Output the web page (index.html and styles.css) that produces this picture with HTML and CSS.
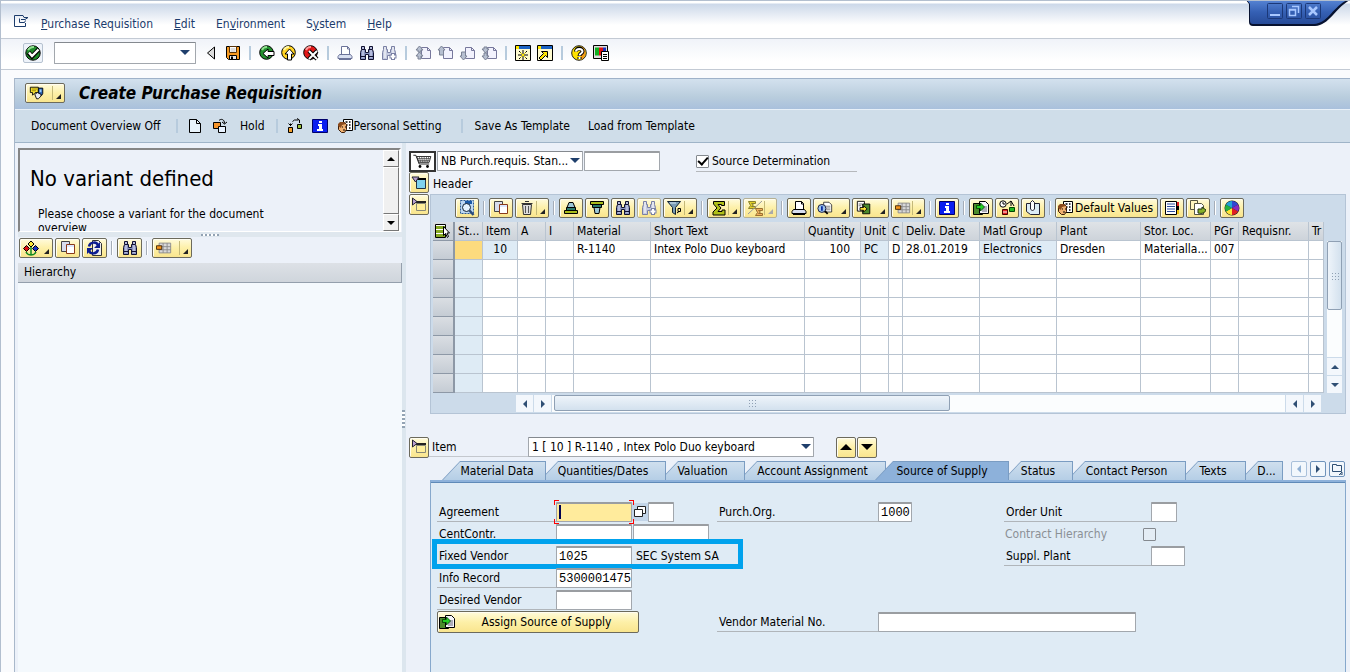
FILE: index.html
```html
<!DOCTYPE html>
<html lang="en">
  <head>
    <meta charset="UTF-8" />
    <meta name="viewport" content="width=device-width, initial-scale=1" />
    <title>Create Purchase Requisition</title>
    <link rel="stylesheet" href="styles.css">
  </head>
  <body>
    <svg class="sprite" aria-hidden="true">
      <symbol id="i-ok" viewBox="0 0 16 16"><circle cx="8" cy="8" r="7.2" fill="#1e8a2a" stroke="#000" /><path d="M3 5a6 6 0 0 1 6-3" stroke="#8fe08f" stroke-width="2" fill="none" /><path d="M3.500 7.500l3.500 4 6.500-7" stroke="#000" stroke-width="4.500" fill="none" /><path d="M4 7.500l3 3.500 6.500-6.500" stroke="#fff" stroke-width="2.400" fill="none" /></symbol>
      <symbol id="i-save" viewBox="0 0 16 16"><path d="M1.500 1.500h13v13h-11l-2-2z" fill="#f59a23" stroke="#000" /><path d="M4.500 1.500h7v6h-7z" fill="#fff" stroke="#5a3408" /><path d="M5.500 4h5M5.500 6h5" stroke="#bbb" /><path d="M4.500 10.500h7v4h-7z" fill="#e9e9e9" stroke="#000" /><path d="M6 11.500h2v3H6z" fill="#000" /></symbol>
      <symbol id="i-back" viewBox="0 0 16 16"><circle cx="7.500" cy="7.500" r="6.800" fill="#22902e" stroke="#000" /><path d="M3 5a5 5 0 0 1 5-3" stroke="#8fe08f" stroke-width="2" fill="none" /><path d="M4 8.500l5-4.500v2.500h6v4H9V13z" fill="#fff" stroke="#000" /></symbol>
      <symbol id="i-exit" viewBox="0 0 16 16"><circle cx="7.500" cy="7.500" r="6.800" fill="#ffd324" stroke="#000" /><path d="M3 5a5 5 0 0 1 5-3" stroke="#fff7a8" stroke-width="2" fill="none" /><path d="M8.500 4L13 9h-2.500v6h-4V9H4z" fill="#fff" stroke="#000" /></symbol>
      <symbol id="i-cancel" viewBox="0 0 16 16"><circle cx="7.500" cy="7.500" r="6.800" fill="#e01818" stroke="#000" /><path d="M3 5a5 5 0 0 1 5-3" stroke="#ff9a9a" stroke-width="2" fill="none" /><path d="M6 6l8 8M14 6l-8 8" stroke="#000" stroke-width="4" /><path d="M6 6l8 8M14 6l-8 8" stroke="#fff" stroke-width="2" /></symbol>
      <symbol id="i-print" viewBox="0 0 16 16"><path d="M4.500 10V1.500h6l2 2V10" fill="#fff" stroke="currentColor" /><path d="M10.500 1.500v2.500h2" fill="none" stroke="currentColor" /><path d="M2.500 9.500h11l1.500 2v2H1v-2z" fill="#d8dff0" stroke="currentColor" /><path d="M2 14h12" stroke="currentColor" stroke-width="2" /></symbol>
      <symbol id="i-find" viewBox="0 0 16 16"><path d="M2.500 1.500h3v3h1v3h3v-3h1v-3h3v3l1 3v7h-5v-5h-3v5h-5v-7l1-3z" fill="#8a94c0" stroke="#101030" /><path d="M4 2v11M12 2v11" stroke="#dfe3f8" /><path d="M1.500 11.500h5M9.500 11.500h5M3 4.500h3M10 4.500h3" stroke="#101030" /></symbol>
      <symbol id="i-findnext" viewBox="0 0 16 16"><path d="M2.500 1.500h3v3h1v3h3v-3h1v-3h3v3l1 3v3h-8v4h-5v-7l1-3z" fill="#c5cbe0" stroke="#7a80a4" /><path d="M4 2v11M12 2v6" stroke="#fff" /><path d="M12 8v7M8.500 11.500h7" stroke="#7a80a4" stroke-width="4" /><path d="M12 9v5M9.500 11.500h5" stroke="#fff" stroke-width="2" /></symbol>
      <symbol id="i-page" viewBox="0 0 16 16"><path d="M6.500 2.500h6l3 3v8h-9z" fill="#f2f2fd" stroke="#77789c" /><path d="M12.500 2.500v3h3" fill="none" stroke="#77789c" /></symbol>
      <symbol id="i-first" viewBox="0 0 16 16"><use href="#i-page" /><path d="M4.500 1L8 5H6v2H3V5H1zM4.500 7L8 11H6v3H3v-3H1z" fill="#b6bfd0" stroke="#7b8295" /></symbol>
      <symbol id="i-prev" viewBox="0 0 16 16"><use href="#i-page" /><path d="M4.500 1L8 5H6.500v5h-4V5H1z" fill="#b6bfd0" stroke="#7b8295" /></symbol>
      <symbol id="i-next" viewBox="0 0 16 16"><use href="#i-page" /><path d="M2.500 7h4v4H8l-3.500 4L1 11h1.500z" fill="#b6bfd0" stroke="#7b8295" /></symbol>
      <symbol id="i-last" viewBox="0 0 16 16"><use href="#i-page" /><path d="M3 2h3v2h2L4.500 8 1 4h2zM3 8h3v3h2l-3.500 4L1 11h2z" fill="#b6bfd0" stroke="#7b8295" /></symbol>
      <symbol id="i-session" viewBox="0 0 16 16"><path d="M.5.5h15v15H.5z" fill="#fffbd0" stroke="#000" /><path d="M1 1h14v3H1z" fill="#1b62c4" /><path d="M1 1h3v3H1z" fill="#ffe600" /><path d="M4 6l8 8M12 6l-8 8M8 5v10M3 10h10" stroke="#000" /><path d="M5.500 7.500l5 5M10.500 7.500l-5 5" stroke="#ffe600" /><path d="M7 9h2v2H7z" fill="#ffe600" /></symbol>
      <symbol id="i-shortcut" viewBox="0 0 16 16"><path d="M.5.5h15v15H.5z" fill="#fffbd0" stroke="#000" /><path d="M1 1h14v3H1z" fill="#1b62c4" /><path d="M1 1h3v3H1z" fill="#ffe600" /><path d="M4.500 6.500h6v6l-2-2-4.500 4.500-2-2L6.500 8.500z" fill="#ffe600" stroke="#000" /></symbol>
      <symbol id="i-help" viewBox="0 0 16 16"><circle cx="8" cy="8" r="7.300" fill="#ffe100" stroke="#222" /><path d="M10 1.500a7 7 0 0 1 0 13z" fill="#f59a1a" /><path d="M5 6.500c0-4 6.500-4 6.500 0 0 2-3 2-3 4.500M8.500 12v2" stroke="#000" stroke-width="4" fill="none" /><path d="M5 6.500c0-3.500 6.500-3.500 6.500 0 0 2-3 2-3 4M8.500 12v2" stroke="#fff" stroke-width="2" fill="none" /></symbol>
      <symbol id="i-layout" viewBox="0 0 16 16"><path d="M.5.5h14v13H.5z" fill="#ddd" stroke="#000" /><path d="M2 2.500h4v8H2z" fill="#10b020" /><path d="M6 2.500h4v8H6z" fill="#e01010" /><path d="M10 2.500h3v8h-3z" fill="#1a30c0" /><path d="M8.500 6.500h7v9h-7z" fill="#fff" stroke="#000" /><path d="M10 9.500h4M10 11.500h4M10 13.500h4" stroke="#000" /></symbol>
      <symbol id="i-chat" viewBox="0 0 18 16"><path d="M1.500 1.500h9v6H7l-3 3V7.500H1.500z" fill="#ffe836" stroke="#000" /><path d="M3 3.500h6M3 5.500h5" stroke="#8a7a00" /><path d="M10.500 2.500h5v6l-1 2h-4z" fill="#2a62b8" stroke="#000" /><path d="M6.500 9.500l3-2 4 2v2l-3 3h-2z" fill="#e8eaf4" stroke="#000" /><path d="M12 4h2v3h-2z" fill="#9cd0ff" /></symbol>
      <symbol id="i-new" viewBox="0 0 16 16"><path d="M2.500 1.500h7l4 4v9h-11z" fill="#e8f3fb" stroke="#000" /><path d="M9.500 1.500v4h4" fill="none" stroke="#000" /></symbol>
      <symbol id="i-other" viewBox="0 0 16 16"><path d="M1.500 4.500h7v6h-7z" fill="#f5942a" stroke="#000" /><path d="M6.500 8.500h7v6h-7z" fill="#e8f2ff" stroke="#000" /><path d="M7 2.500c2-2 5.500-1.500 5.500 3M10 4l2.500 2L15 4" fill="none" stroke="#000" /></symbol>
      <symbol id="i-rel" viewBox="0 0 16 16"><path d="M1.500 9.500h4v5h-4z" fill="#f5a02a" stroke="#000" /><path d="M10.500 6.500h4v4h-4z" fill="#9ac43a" stroke="#000" /><path d="M3.500 8V5.500M5.500 3.500l2-1.500h4M10 .5L12.500 2v3M1.500 5.500l2 2 2-2" fill="none" stroke="#000" /></symbol>
      <symbol id="i-info" viewBox="0 0 16 16"><path d="M.5 1.500h15v13H.5z" fill="#0a1ef0" stroke="#00006a" /><path d="M7 3h3v2H7zM6 6h4v5h1v2H5v-2h2V8H6z" fill="#fff" /></symbol>
      <symbol id="i-person" viewBox="0 0 16 16"><path d="M6.500 1.500h9v11h-9z" fill="#fff" stroke="#000" /><path d="M8.500 4h2M12 4h1.500M8.500 7h2M12 7h1.500M12 10h1.500" stroke="#000" stroke-width="1.500" /><path d="M1.500 6.500l2-2h4l2 2v5l-2 3h-3l-3-3z" fill="#f0b070" stroke="#3a1c08" /><path d="M1 8V6l2-2h4l2 2-4 1-1 3z" fill="#8a4a1c" /><path d="M5 9h1M8 9h1M6 12h2" stroke="#000" /></symbol>
      <symbol id="i-colors" viewBox="0 0 16 16"><path d="M8 1l3 3-3 3-3-3z" fill="#ffe836" stroke="#000" /><path d="M3.500 5.500l3 3-3 3-3-3z" fill="#e01010" stroke="#000" /><path d="M12.500 5.500l3 3-3 3-3-3z" fill="#1a30c0" stroke="#000" /><path d="M8 7v8M3 12c1 2 3 3 5 3s4-1 5-3" fill="none" stroke="#128a20" stroke-width="1.500" /></symbol>
      <symbol id="i-copy" viewBox="0 0 16 16"><path d="M1.500 1.500h8v10h-8z" fill="#d8dced" stroke="#444" /><path d="M6.500 4.500h8v9h-8z" fill="#fff" stroke="#8a3a1a" /><path d="M7 5h7v2H7z" fill="#dce8ff" /></symbol>
      <symbol id="i-refresh" viewBox="0 0 16 16"><path d="M5.500.5h6l3 3v12h-9z" fill="#eee" stroke="#333" /><path d="M2 6.500c1-5 8-5 9-1M11 9.500c-1 5-8 5-9 1" stroke="#0c1c90" stroke-width="2.500" fill="none" /><path d="M13 2v6H7zM0 14V8h6z" fill="#0c1c90" /></symbol>
      <symbol id="i-grid" viewBox="0 0 18 16"><path d="M3.500 2.500h13v11h-13z" fill="#d8d8d8" stroke="#888" /><path d="M3.500 6.500h13M3.500 10h13M8 2.500v11M12.500 2.500v11" fill="none" stroke="#888" /><path d="M.5 5.500h6v4h-6z" fill="#f5941a" stroke="#3a2000" /></symbol>
      <symbol id="i-cart" viewBox="0 0 24 18"><path d="M1 1.500h3l4 10.500h12" fill="none" stroke="#000" /><path d="M5 3h17l-2 7H8z" fill="#fff" stroke="#111" /><path d="M8 3l2 7M11 3l1 7M14 3v7M17 3l-1 7M19.500 3L18 10M6 5.500h15M7 8h13" stroke="#333" stroke-width=".8" /><circle cx="9" cy="15" r="1.700" /><circle cx="18" cy="15" r="1.700" /></symbol>
      <symbol id="i-collapse" viewBox="0 0 16 16"><path d="M5.500 4.500h9v9h-9z" fill="#7fd2ee" stroke="#234" /><path d="M5 4h10" stroke="#000" stroke-width="2" /><path d="M1 2h7L4.500 7z" fill="#b9a0d0" stroke="#223" /></symbol>
      <symbol id="i-expand" viewBox="0 0 16 16"><path d="M5.500 6.500h9v7h-9z" fill="#ffef9a" stroke="#887" /><path d="M5 5h10" stroke="#222" stroke-width="2" /><path d="M1.500 1v7L6 4.500z" fill="#b9a0d0" stroke="#223" /></symbol>
      <symbol id="i-detail" viewBox="0 0 16 16"><path d="M1.500.5h13v13h-13z" fill="#bcd8f4" stroke="#2a5a9a" stroke-dasharray="2 1" /><path d="M6 2.500h7" stroke="#1a5aa8" stroke-width="3" /><circle cx="7.500" cy="7.500" r="4" fill="#e6f4ff" stroke="#123" /><path d="M10.500 10.500l4 4.500" stroke="#2a4a7a" stroke-width="2.500" /></symbol>
      <symbol id="i-trash" viewBox="0 0 16 16"><path d="M3.500 4.500h9l-1 10h-7z" fill="#ddd" stroke="#333" /><path d="M2.500 3.500h11M6 1.500h4" stroke="#333" /><path d="M6.500 6v7M9.500 6v7" stroke="#555" /></symbol>
      <symbol id="i-asc" viewBox="0 0 16 16"><path d="M6 2.500h4l2 5H4z" fill="#9cc8d8" stroke="#000" /><path d="M1.500 10.500h13v3h-13z" fill="#a8bc1a" stroke="#000" /><path d="M3.500 7.500h9v3h-9z" fill="#2a7a6a" stroke="#000" /></symbol>
      <symbol id="i-desc" viewBox="0 0 16 16"><path d="M1.500 1.500h13v3h-13z" fill="#a8bc1a" stroke="#000" /><path d="M3.500 4.500h9v3h-9z" fill="#2a7a6a" stroke="#000" /><path d="M5 7.500h6l-1 6H6z" fill="#9cc8d8" stroke="#000" /></symbol>
      <symbol id="i-filter" viewBox="0 0 16 16"><path d="M.5 1.500h13l-5 6v7l-3-2v-5z" fill="#7a9cb4" stroke="#102030" /><path d="M3 3h6" stroke="#d6e6f2" /><path d="M11 8.500h2.500v3H11zM10 13l2-1.500" fill="none" stroke="#000" /></symbol>
      <symbol id="i-sum" viewBox="0 0 16 16"><path d="M2.500 1.500h11v4h-3v-1H7l3 3.500-3 3.500h4v-1.500h3v5h-12v-3l4-4-3.500-4z" fill="#b0c018" stroke="#000" /></symbol>
      <symbol id="i-subsum" viewBox="0 0 16 16"><path d="M1.500 1.500h7v2h-4l2 1.500-2 1.500h4v2h-7l2-3z" fill="#e3d028" stroke="#8a8230" /><path d="M8.500 8.500h7v2h-4l2 1.500-2 1.500h4v2h-7l2-3z" fill="#f0b060" stroke="#9a7030" /><path d="M15 1L1 14" stroke="#999" /></symbol>
      <symbol id="i-preview" viewBox="0 0 18 16"><path d="M7.500 1.500h6l3 3v8h-9z" fill="#fff" stroke="#333" /><path d="M9 6h6M9 8h6M9 10h6" stroke="#777" /><circle cx="5.500" cy="8.500" r="4.500" fill="#9cc4ee" stroke="#113" /><path d="M5.500 6v5" stroke="#0a2aa0" stroke-width="2" /><path d="M9 11.500l3 3" stroke="#000" stroke-width="2" /></symbol>
      <symbol id="i-export" viewBox="0 0 18 16"><path d="M1.500.5h8v11h-8z" fill="#fff" stroke="#000" /><path d="M3 3.500h4M3 5.500h3" stroke="#666" /><path d="M7.500 3.500h8v11h-8z" fill="#4c8a2c" stroke="#000" /><path d="M4.500 7.500h4v-2l4 3.500-4 3.500v-2h-4z" fill="#ffe636" stroke="#000" /></symbol>
      <symbol id="i-assign" viewBox="0 0 16 16"><path d="M.5 3.500h9v11h-9z" fill="#4c8a2c" stroke="#000" /><path d="M6.500 1.500h6l3 3v9h-9z" fill="#f4f4fa" stroke="#000" /><path d="M9 7h5M9 9h5M9 11h5" stroke="#667" /><path d="M3.500 5.500h4V3l4 4-4 4V8.500h-4z" fill="#22d022" stroke="#003a00" stroke-width=".8" /></symbol>
      <symbol id="i-alarm" viewBox="0 0 16 16"><circle cx="4" cy="4" r="3.200" fill="#fff" stroke="#000" /><path d="M4 2v2h2M8 4l4-3 3 5M12 1v5" fill="none" stroke="#000" /><path d="M3.500 9.500h5v5h-5z" fill="#e02020" stroke="#400" /><path d="M10.500 7.500h5v4h-5z" fill="#20b820" stroke="#040" /><path d="M4 12h4" stroke="#fff" /></symbol>
      <symbol id="i-clip" viewBox="0 0 16 16"><path d="M1.500 3.500h13v11h-9l-4-3z" fill="#dcecf6" stroke="#223" /><path d="M5.500 9V2.500l2-2 2 2V9l-2 2z" fill="#fff" stroke="#223" /></symbol>
      <symbol id="i-list" viewBox="0 0 16 16"><path d="M1.500 1.500h11v13h-11z" fill="#fff" stroke="#000" /><path d="M3 4h8M3 6.500h8M3 9h8M3 11.500h8" stroke="#2a4a9a" /><path d="M13 2h2v4h-2z" fill="#e02020" /><path d="M13 6h2v4h-2z" fill="#000" /><path d="M13 10h2v4h-2z" fill="#f0c010" /></symbol>
      <symbol id="i-pages" viewBox="0 0 16 16"><path d="M.5.5h7v9h-7z" fill="#fff6c0" stroke="#554" /><path d="M4.500 3.500h7l2 2v9h-9z" fill="#fff" stroke="#554" /><path d="M8 9h4V7l4 3c-1 3-4 4-8 3z" fill="#86b02a" stroke="#231" /></symbol>
      <symbol id="i-pie" viewBox="0 0 16 16"><circle cx="8" cy="8" r="7.500" fill="#222" /><path d="M8 8V1a7 7 0 0 1 6 3.500z" fill="#3048d0" /><path d="M8 8l6-3.500a7 7 0 0 1 0 7z" fill="#8a2ac0" /><path d="M8 8l6 3.500A7 7 0 0 1 8 15z" fill="#e02020" /><path d="M8 8v7a7 7 0 0 1-6-3.500z" fill="#ffe636" /><path d="M8 8l-6 3.500a7 7 0 0 1 0-7z" fill="#22b040" /><path d="M8 8L2 4.500A7 7 0 0 1 8 1z" fill="#22a0d8" /></symbol>
      <symbol id="i-select" viewBox="0 0 16 16"><path d="M1.500 1.500h10v13h-10z" fill="#fff" stroke="#000" /><path d="M2 3h9v3H2zM2 7h9v3H2zM2 11h9v3H2z" fill="#86a822" /><path d="M9.500 3.500v9l2-2 2 4 1-1-1.500-3.500h2.500z" fill="#fff" stroke="#000" /></symbol>
    </svg>

    <header class="menubar">
      <svg class="menu-icon" viewBox="0 0 16 14"><path d="M7 1.500H1.500v11H12.500V9M7 1.500h3l1 2h4l-3 2H8M6.500 4.500v4h5l1-2" fill="none" stroke="#1c3c6c" /></svg>
      <nav class="menus">
        <a href="#"><u>P</u>urchase Requisition</a>
        <a href="#"><u>E</u>dit</a>
        <a href="#">En<u>v</u>ironment</a>
        <a href="#">S<u>y</u>stem</a>
        <a href="#"><u>H</u>elp</a>
      </nav>
      <svg class="window-controls" viewBox="0 0 105 28">
        <defs><linearGradient id="wc" x2="0" y2="1"><stop offset="0" stop-color="#5684d4" /><stop offset=".5" stop-color="#3560b4" /><stop offset="1" stop-color="#274b98" /></linearGradient></defs>
        <path d="M1 0h104C90 8 85 25 70 26H8q-4 0-4-4V4z" fill="#071230" />
        <path d="M2 0h100C87 8 83 23 69 24H8q-3 0-3-3V4z" fill="url(#wc)" />
        <g fill="none" stroke="#1b3878"><rect x="22.500" y="3.500" width="15" height="15" rx="1" /><rect x="41.500" y="3.500" width="15" height="15" rx="1" /><rect x="60.500" y="3.500" width="15" height="15" rx="1" /></g>
        <path d="M25 15h10" stroke="#a9c8ff" stroke-width="2" />
        <path d="M44.500 9.500h6v6h-6zM44.500 10h6M47 6.500h6.500V13" fill="none" stroke="#a9c8ff" stroke-width="1.500" />
        <path d="M64 7l8 8M72 7l-8 8" stroke="#a9c8ff" stroke-width="2.500" />
      </svg>
    </header>

    <div class="toolbar">
      <button class="tool ok" aria-label="Enter"><svg><use href="#i-ok" /></svg></button>
      <div class="select command"><select aria-label="Command"><option></option></select></div>
      <button class="tool tri" aria-label="Collapse command field"><svg viewBox="0 0 10 16"><path d="M8.500 2v12L1.500 8z" fill="#ddd" stroke="#000" /></svg></button>
      <button class="tool" aria-label="Save"><svg><use href="#i-save" /></svg></button>
      <span class="sep"></span>
      <button class="tool" aria-label="Back"><svg><use href="#i-back" /></svg></button>
      <button class="tool" aria-label="Exit"><svg><use href="#i-exit" /></svg></button>
      <button class="tool" aria-label="Cancel"><svg><use href="#i-cancel" /></svg></button>
      <span class="sep"></span>
      <button class="tool dim" aria-label="Print"><svg><use href="#i-print" /></svg></button>
      <button class="tool" aria-label="Find"><svg><use href="#i-find" /></svg></button>
      <button class="tool" aria-label="Find next"><svg><use href="#i-findnext" /></svg></button>
      <span class="sep"></span>
      <button class="tool" aria-label="First page"><svg><use href="#i-first" /></svg></button>
      <button class="tool" aria-label="Previous page"><svg><use href="#i-prev" /></svg></button>
      <button class="tool" aria-label="Next page"><svg><use href="#i-next" /></svg></button>
      <button class="tool" aria-label="Last page"><svg><use href="#i-last" /></svg></button>
      <span class="sep"></span>
      <button class="tool" aria-label="New session"><svg><use href="#i-session" /></svg></button>
      <button class="tool" aria-label="Create shortcut"><svg><use href="#i-shortcut" /></svg></button>
      <span class="sep"></span>
      <button class="tool" aria-label="Help"><svg><use href="#i-help" /></svg></button>
      <button class="tool" aria-label="Customize layout"><svg><use href="#i-layout" /></svg></button>
    </div>

    <main class="screen">
      <div class="titlebar">
        <button class="btn split wide" aria-label="Services"><svg><use href="#i-chat" /></svg></button>
        <h1>Create Purchase Requisition</h1>
      </div>

      <div class="appbar">
        <button class="text-btn first">Document Overview Off</button>
        <span class="sep"></span>
        <button class="tool" aria-label="Create"><svg><use href="#i-new" /></svg></button>
        <button class="tool" aria-label="Other requisition"><svg><use href="#i-other" /></svg></button>
        <button class="text-btn hold">Hold</button>
        <span class="sep"></span>
        <button class="tool" aria-label="Object services"><svg><use href="#i-rel" /></svg></button>
        <button class="tool" aria-label="Information"><svg><use href="#i-info" /></svg></button>
        <button class="text-btn"><svg><use href="#i-person" /></svg>Personal Setting</button>
        <span class="sep far"></span>
        <button class="text-btn">Save As Template</button>
        <button class="text-btn">Load from Template</button>
      </div>

      <div class="content">
        <aside class="overview">
          <div class="viewer">
            <div class="viewer-text">
              <h2>No variant defined</h2>
              <p>Please choose a variant for the document overview</p>
            </div>
            <div class="old-scroll">
              <button aria-label="Scroll up"><i class="up"></i></button>
              <span></span>
              <button aria-label="Scroll down"><i class="down"></i></button>
            </div>
          </div>
          <div class="grip-row"><span class="grip"></span></div>
          <div class="btn-row">
            <button class="btn menu" aria-label="Selection variant"><svg><use href="#i-colors" /></svg></button>
            <button class="btn" aria-label="Copy"><svg><use href="#i-copy" /></svg></button>
            <button class="btn" aria-label="Refresh"><svg><use href="#i-refresh" /></svg></button>
            <span class="sep"></span>
            <button class="btn" aria-label="Find"><svg><use href="#i-find" /></svg></button>
            <span class="sep"></span>
            <button class="btn split wide" aria-label="Change layout"><svg><use href="#i-grid" /></svg></button>
          </div>
          <div class="tree-head">Hierarchy</div>
          <div class="tree"></div>
        </aside>

        <div class="splitter"><span class="grip vertical"></span></div>

        <section class="document">
          <div class="doc-head">
            <span class="cart"><svg><use href="#i-cart" /></svg></span>
            <div class="select doc-type"><select aria-label="Document type"><option>NB Purch.requis. Stan...</option></select></div>
            <input class="field" type="text" aria-label="Requisition number" />
            <label class="source-check"><input type="checkbox" checked />Source Determination</label>
          </div>

          <div class="head-line">
            <button class="btn side" aria-label="Expand header"><svg><use href="#i-collapse" /></svg></button>
            <span>Header</span>
          </div>

          <div class="items">
            <button class="btn side" aria-label="Collapse items"><svg><use href="#i-expand" /></svg></button>
            <div class="grid-box">
              <div class="btn-row">
                <button class="btn" aria-label="Details"><svg><use href="#i-detail" /></svg></button>
                <span class="sep"></span>
                <button class="btn" aria-label="Copy"><svg><use href="#i-copy" /></svg></button>
                <button class="btn split" aria-label="Delete"><svg><use href="#i-trash" /></svg></button>
                <span class="sep"></span>
                <button class="btn" aria-label="Sort ascending"><svg><use href="#i-asc" /></svg></button>
                <button class="btn" aria-label="Sort descending"><svg><use href="#i-desc" /></svg></button>
                <button class="btn" aria-label="Find"><svg><use href="#i-find" /></svg></button>
                <button class="btn faded" aria-label="Find next"><svg><use href="#i-findnext" /></svg></button>
                <button class="btn split" aria-label="Filter"><svg><use href="#i-filter" /></svg></button>
                <span class="sep"></span>
                <button class="btn split" aria-label="Total"><svg><use href="#i-sum" /></svg></button>
                <button class="btn split faded" aria-label="Subtotals"><svg><use href="#i-subsum" /></svg></button>
                <span class="sep"></span>
                <button class="btn" aria-label="Print"><svg><use href="#i-print" /></svg></button>
                <button class="btn menu" aria-label="Views"><svg><use href="#i-preview" /></svg></button>
                <button class="btn menu" aria-label="Export"><svg><use href="#i-export" /></svg></button>
                <button class="btn split" aria-label="Change layout"><svg><use href="#i-grid" /></svg></button>
                <span class="sep"></span>
                <button class="btn" aria-label="Information"><svg><use href="#i-info" /></svg></button>
                <span class="sep"></span>
                <button class="btn" aria-label="Assign source"><svg><use href="#i-assign" /></svg></button>
                <button class="btn" aria-label="Release strategy"><svg><use href="#i-alarm" /></svg></button>
                <button class="btn" aria-label="Attachments"><svg><use href="#i-clip" /></svg></button>
                <span class="sep"></span>
                <button class="btn labelled"><svg><use href="#i-person" /></svg>Default Values</button>
                <button class="btn" aria-label="Item list"><svg><use href="#i-list" /></svg></button>
                <button class="btn" aria-label="Catalog"><svg><use href="#i-pages" /></svg></button>
                <span class="sep"></span>
                <button class="btn" aria-label="Graphic"><svg><use href="#i-pie" /></svg></button>
              </div>

              <div class="grid-body">
                <div class="table-wrap">
                  <table>
                    <colgroup>
                      <col class="w22"><col class="w28"><col class="w35"><col class="w28"><col class="w28"><col class="w77">
                      <col class="w154"><col class="w56"><col class="w28"><col class="w14"><col class="w77"><col class="w77">
                      <col class="w84"><col class="w70"><col class="w28"><col class="w70"><col>
                    </colgroup>
                    <thead>
                      <tr>
                        <th class="mark"><svg><use href="#i-select" /></svg></th>
                        <th>St...</th>
                        <th>Item</th>
                        <th>A</th>
                        <th>I</th>
                        <th>Material</th>
                        <th>Short Text</th>
                        <th>Quantity</th>
                        <th>Unit</th>
                        <th>C</th>
                        <th>Deliv. Date</th>
                        <th>Matl Group</th>
                        <th>Plant</th>
                        <th>Stor. Loc.</th>
                        <th>PGr</th>
                        <th>Requisnr.</th>
                        <th>Tr</th>
                      </tr>
                    </thead>
                    <tbody>
                      <tr>
                        <td class="mark"></td>
                        <td class="current"></td>
                        <td class="fixed num">10</td>
                        <td></td>
                        <td></td>
                        <td>R-1140</td>
                        <td>Intex Polo Duo keyboard</td>
                        <td class="num">100</td>
                        <td class="fixed">PC</td>
                        <td>D</td>
                        <td>28.01.2019</td>
                        <td class="fixed">Electronics</td>
                        <td>Dresden</td>
                        <td>Materialla...</td>
                        <td>007</td>
                        <td></td>
                        <td></td>
                      </tr>
                      <tr><td class="mark"></td><td class="fixed"></td><td></td><td></td><td></td><td></td><td></td><td></td><td></td><td></td><td></td><td></td><td></td><td></td><td></td><td></td><td></td></tr>
                      <tr><td class="mark"></td><td class="fixed"></td><td></td><td></td><td></td><td></td><td></td><td></td><td></td><td></td><td></td><td></td><td></td><td></td><td></td><td></td><td></td></tr>
                      <tr><td class="mark"></td><td class="fixed"></td><td></td><td></td><td></td><td></td><td></td><td></td><td></td><td></td><td></td><td></td><td></td><td></td><td></td><td></td><td></td></tr>
                      <tr><td class="mark"></td><td class="fixed"></td><td></td><td></td><td></td><td></td><td></td><td></td><td></td><td></td><td></td><td></td><td></td><td></td><td></td><td></td><td></td></tr>
                      <tr><td class="mark"></td><td class="fixed"></td><td></td><td></td><td></td><td></td><td></td><td></td><td></td><td></td><td></td><td></td><td></td><td></td><td></td><td></td><td></td></tr>
                      <tr><td class="mark"></td><td class="fixed"></td><td></td><td></td><td></td><td></td><td></td><td></td><td></td><td></td><td></td><td></td><td></td><td></td><td></td><td></td><td></td></tr>
                      <tr><td class="mark"></td><td class="fixed"></td><td></td><td></td><td></td><td></td><td></td><td></td><td></td><td></td><td></td><td></td><td></td><td></td><td></td><td></td><td></td></tr>
                    </tbody>
                  </table>
                </div>
                <div class="vscroll">
                  <div class="track"><span class="thumb"><i class="dots"></i></span></div>
                  <button aria-label="Scroll up"><i class="up"></i></button>
                  <button aria-label="Scroll down"><i class="down"></i></button>
                </div>
              </div>
              <div class="hscroll">
                <button aria-label="Scroll left"><i class="left"></i></button>
                <button aria-label="Scroll right"><i class="right"></i></button>
                <div class="track"><span class="thumb"><i class="dots"></i></span></div>
                <button aria-label="Scroll left"><i class="left"></i></button>
                <button aria-label="Scroll right"><i class="right"></i></button>
              </div>
            </div>
          </div>

          <div class="item-line">
            <button class="btn side" aria-label="Collapse item details"><svg><use href="#i-expand" /></svg></button>
            <label for="item-select">Item</label>
            <div class="select item-select"><select id="item-select"><option>1 [ 10 ] R-1140 , Intex Polo Duo keyboard</option></select></div>
            <button class="btn side arrow" aria-label="Previous item"><i class="up"></i></button>
            <button class="btn side" aria-label="Next item"><i class="down"></i></button>
          </div>

          <div class="tabstrip">
            <div class="tabs" role="tablist">
              <button class="tab t1" role="tab">Material Data</button>
              <button class="tab t2" role="tab">Quantities/Dates</button>
              <button class="tab t3" role="tab">Valuation</button>
              <button class="tab t4" role="tab">Account Assignment</button>
              <button class="tab t5 active" role="tab" aria-selected="true">Source of Supply</button>
              <button class="tab t6" role="tab">Status</button>
              <button class="tab t7" role="tab">Contact Person</button>
              <button class="tab t8" role="tab">Texts</button>
              <button class="tab t9" role="tab">D...</button>
            </div>
            <div class="tab-nav">
              <button class="off" aria-label="Previous tab"><i class="left"></i></button>
              <button aria-label="Next tab"><i class="right"></i></button>
              <button aria-label="Tab list"><svg viewBox="0 0 12 12"><path d="M1.500 8.500v-7h4v1h5v6zM11 9v3H8z" fill="none" stroke="#2f4f74" /></svg></button>
            </div>
          </div>

          <div class="panel">
            <form class="fields">
              <div class="row left r1">
                <label for="agreement">Agreement</label>
                <span class="focus"><input class="field" id="agreement" type="text" /></span>
                <button class="match" type="button" aria-label="Search agreement"><svg viewBox="0 0 14 14"><path d="M4.500 1.500h8v7h-8z" fill="#fff" stroke="#222" /><path d="M1.500 4.500h8v7h-8z" fill="#fff" stroke="#222" /></svg></button>
                <input class="field w26" type="text" aria-label="Agreement item" />
              </div>
              <div class="row left r2">
                <label for="contract">CentContr.</label>
                <input class="field" id="contract" type="text" />
                <input class="field next" type="text" aria-label="Central contract item" />
              </div>
              <div class="row left r3 marked">
                <label for="vendor">Fixed Vendor</label>
                <input class="field" id="vendor" type="text" value="1025" />
                <span class="hint">SEC System SA</span>
              </div>
              <div class="row left r4">
                <label for="info">Info Record</label>
                <input class="field" id="info" type="text" value="5300001475" />
              </div>
              <div class="row left r5">
                <label for="desired">Desired Vendor</label>
                <input class="field" id="desired" type="text" />
              </div>
              <div class="row left r6">
                <button class="btn assign" type="button"><svg><use href="#i-assign" /></svg><span>Assign Source of Supply</span></button>
              </div>

              <div class="row middle r1">
                <label for="porg">Purch.Org.</label>
                <input class="field w34" id="porg" type="text" value="1000" />
              </div>
              <div class="row middle r6 long">
                <label for="vmat">Vendor Material No.</label>
                <input class="field w258" id="vmat" type="text" />
              </div>

              <div class="row right r1">
                <label for="unit">Order Unit</label>
                <input class="field w26" id="unit" type="text" />
              </div>
              <div class="row right r2 off">
                <label for="hier">Contract Hierarchy</label>
                <input id="hier" type="checkbox" disabled />
              </div>
              <div class="row right r3">
                <label for="splant">Suppl. Plant</label>
                <input class="field w34" id="splant" type="text" />
              </div>
            </form>
          </div>
        </section>
      </div>
    </main>
  </body>
</html>
```

FILE: styles.css
```css
* {
  box-sizing: border-box;
}
body {
  margin: 0;
  min-height: 100vh;
  display: flex;
  flex-direction: column;
  font-family: "DejaVu Sans Condensed", "DejaVu Sans", sans-serif;
  font-size: 12px;
  line-height: 16px;
  color: #000;
  background: #fafbfd;
  border-top: 1px solid #b3bfcf;
  border-left: 1px solid #b3bfcf;
}
button,
input,
select {
  font: inherit;
  color: inherit;
  margin: 0;
}
button {
  display: flex;
  align-items: center;
  justify-content: center;
  padding: 0;
  border: 0;
  background: none;
  white-space: nowrap;
}
svg {
  width: 16px;
  height: 16px;
  flex: none;
  display: block;
}
.sprite {
  position: absolute;
  width: 0;
  height: 0;
}

/* menu and system toolbar */
.menubar {
  position: relative;
  display: flex;
  align-items: center;
  height: 38px;
  padding: 8px 12px 0;
  background: linear-gradient(#fff 2px, #ccd8e9 3px, #fff 24px);
  border-bottom: 1px solid #c3cad4;
}
.menus {
  display: flex;
  gap: 21px;
  margin-left: 12px;
}
.menus a {
  color: #1c3c6c;
  text-decoration: none;
}
.menu-icon {
  height: 14px;
  margin-bottom: 6px;
}
.window-controls {
  position: absolute;
  top: -1px;
  right: 0;
  width: 105px;
  height: 28px;
}
.toolbar {
  display: flex;
  align-items: center;
  gap: 6px;
  height: 31px;
  padding: 0 22px 2px;
  background: linear-gradient(#f0f3f9, #fff 22px);
  border-bottom: 1px solid #c3cad4;
}
.tool.ok {
  width: 20px;
  height: 20px;
  border: 1px solid #b6c2d0;
  border-radius: 2px;
  background: #eef3fa;
}
.tool.tri {
  margin-right: 3px;
}
.tool.tri svg {
  width: 10px;
}
.dim {
  color: #6b7399;
}
.sep {
  width: 2px;
  height: 14px;
  margin: 0 2px;
  background: #b7cbdd;
}
.select {
  position: relative;
}
.select select {
  display: block;
  width: 100%;
  height: 20px;
  padding: 0 3px;
  appearance: none;
  background: #fff;
  border: 1px solid #a2a7ad;
  border-top-color: #84898f;
  border-radius: 1px;
}
.select::after {
  content: "";
  position: absolute;
  right: 3px;
  top: 7px;
  border: 5px solid transparent;
  border-top-color: #1f3f6c;
  border-bottom: 0;
}
.command {
  width: 142px;
  margin: 0 4px 0 5px;
}
.command select {
  height: 22px;
}
.command::after {
  right: 6px;
  top: 8px;
}

/* screen title */
.screen {
  flex: 1;
  display: flex;
  flex-direction: column;
  margin: 8px 0 0 13px;
  border-top: 1px solid #9fb2c9;
  border-left: 1px solid #a9b8ca;
  background: #ecf1f9;
}
.titlebar {
  display: flex;
  align-items: center;
  gap: 14px;
  height: 30px;
  padding: 0 10px 2px;
  background: linear-gradient(#d3e1ee, #b9cddd 60%, #a9c0dc);
}
h1 {
  margin: 0;
  font-size: 17px;
  line-height: 20px;
  font-style: italic;
}
.appbar {
  display: flex;
  align-items: center;
  gap: 9px;
  height: 34px;
  padding: 0 16px;
  background: #cfdde9;
  border-top: 1px solid #e8f0f8;
  border-bottom: 1px solid #9fb4c8;
}
.text-btn.first {
  min-width: 134px;
  justify-content: flex-start;
}
.text-btn.hold {
  margin-left: 3px;
}
.appbar .text-btn + .text-btn {
  margin-left: 9px;
}
.text-btn svg {
  margin-right: 1px;
}
.appbar .sep {
  margin: 0 0 0 2px;
}
.appbar .sep.far {
  margin: 0 3px 0 10px;
}

/* yellow buttons */
.btn {
  position: relative;
  width: 24px;
  height: 20px;
  flex: none;
  border: 1px solid #6c6a5c;
  border-radius: 2px;
  background: linear-gradient(#fffbdc, #fdf0a8 50%, #f9e58e);
  box-shadow: inset 1px 1px #fffdf0;
}
.btn.split,
.btn.menu {
  justify-content: flex-start;
  padding-left: 3px;
}
.btn.split {
  width: 34px;
}
.btn.menu {
  width: 37px;
}
.btn.wide {
  width: 40px;
}
.btn.split::before {
  content: "";
  position: absolute;
  right: 11px;
  top: 2px;
  bottom: 2px;
  border-left: 1px solid #c4b978;
}
.btn.split::after,
.btn.menu::after {
  content: "";
  position: absolute;
  right: 3px;
  bottom: 3px;
  border-left: 5px solid transparent;
  border-bottom: 5px solid #222;
}
.btn.side {
  width: 20px;
  height: 21px;
}
.btn.faded {
  border-color: #b5b094;
}
.btn.faded::after {
  border-bottom-color: #aaa;
}
.btn.labelled {
  width: auto;
  gap: 2px;
  padding: 0 4px 0 1px;
}
.btn-row {
  display: flex;
  align-items: center;
  gap: 2px;
}
i {
  display: block;
  flex: none;
  border: 4px solid transparent;
  color: #2f4f74;
}
i.up {
  border-bottom-color: currentColor;
  border-top: 0;
}
i.down {
  border-top-color: currentColor;
  border-bottom: 0;
}
i.left {
  border-right-color: currentColor;
  border-left: 0;
}
i.right {
  border-left-color: currentColor;
  border-right: 0;
}
.btn i {
  border-width: 6px;
  color: #000;
}
.btn i.up {
  border-top: 0;
}
.btn i.down {
  border-bottom: 0;
}

/* document overview */
.content {
  flex: 1;
  display: flex;
}
.overview {
  width: 387px;
  flex: none;
  display: flex;
  flex-direction: column;
  padding: 5px 0 0 3px;
}
.viewer {
  display: flex;
  height: 84px;
  width: 383px;
  overflow: hidden;
  border: 2px solid #858585;
  border-right: 2px solid #fff;
  border-bottom: 1px solid #fff;
}
.viewer-text {
  flex: 1;
  padding: 16px 10px;
}
h2 {
  margin: 0 0 15px;
  font-size: 22px;
  line-height: 26px;
  font-weight: normal;
}
.viewer p {
  margin: 0 80px 0 8px;
  line-height: 14px;
}
.old-scroll {
  width: 16px;
  display: flex;
  flex-direction: column;
}
.old-scroll button {
  height: 17px;
}
.old-scroll span {
  flex: 1;
}
.old-scroll button,
.old-scroll span {
  background: #f0f0f0;
  border: 1px solid #fff;
  border-right-color: #777;
  border-bottom-color: #777;
}
.old-scroll i {
  color: #000;
}
.grip-row {
  height: 5px;
  display: flex;
  justify-content: center;
  background: #dfe7ee;
}
.grip {
  width: 18px;
  height: 2px;
  margin-top: 2px;
  background: repeating-linear-gradient(90deg, #93a3b4 0 2px, #fff 2px 4px);
}
.overview .btn-row {
  height: 22px;
  padding-left: 1px;
}
.overview .sep,
.grid-box .sep {
  background: linear-gradient(90deg, #a5adb8 1px, #fff 1px);
}
.overview .btn-row .btn {
  width: 25px;
}
.overview .btn-row .menu {
  width: 34px;
}
.overview .btn-row .wide {
  width: 40px;
}
.tree-head {
  height: 20px;
  width: 384px;
  margin-top: 4px;
  padding: 1px 6px;
  background: linear-gradient(#dde1e6, #cfd5dc);
  border-right: 1px solid #949fac;
  border-bottom: 1px solid #949fac;
}
.tree {
  flex: 1;
  background: #f4f9fd;
}
.splitter {
  width: 4px;
  display: flex;
  align-items: center;
  background: #dce6ee;
}
.grip.vertical {
  width: 3px;
  height: 18px;
  margin: 22px 0 0;
  background: repeating-linear-gradient(#93a3b4 0 2px, #fff 2px 4px);
}

/* requisition */
.document {
  flex: 1;
  min-width: 0;
  display: flex;
  flex-direction: column;
  padding: 8px 4px 0 3px;
}
.doc-head {
  display: flex;
  height: 21px;
}
.cart {
  width: 27px;
  padding: 1px;
  border: 2px solid #333;
  background: #fff;
}
.cart svg {
  width: 21px;
  height: 15px;
}
.doc-type {
  width: 146px;
  margin: 0 1px;
}
.source-check {
  display: flex;
  align-items: center;
  gap: 3px;
  width: 161px;
  height: 21px;
  margin-left: 36px;
  border-bottom: 1px solid #b5b8bc;
}
input[type="checkbox"] {
  appearance: none;
  display: grid;
  place-items: center;
  width: 13px;
  height: 13px;
  border: 1px solid #84898f;
  border-radius: 1px;
  background: #fff;
}
input[type="checkbox"]:checked::before {
  content: "";
  width: 8px;
  height: 4px;
  margin-bottom: 3px;
  border: solid #000;
  border-width: 0 0 2px 2px;
  transform: rotate(-48deg);
}
.field {
  width: 76px;
  height: 20px;
  flex: none;
  padding: 0 0 0 2px;
  border: 1px solid #a2a7ad;
  border-top: 2px solid #9a9da1;
  border-radius: 1px;
  background: #fff;
  font-family: "Liberation Mono", monospace;
}
.field:focus {
  outline: none;
}
.head-line,
.items,
.item-line {
  display: flex;
}
.head-line {
  height: 22px;
  gap: 4px;
  line-height: 24px;
}
.items {
  gap: 1px;
}
.grid-box {
  flex: 1;
  min-width: 0;
  background: #ccdbea;
  border: 1px solid #b4c4d6;
}
.grid-box .btn-row {
  height: 27px;
  padding: 0 0 1px 24px;
}
.grid-body {
  display: flex;
}
.table-wrap {
  flex: 1;
  min-width: 0;
  overflow: hidden;
  padding-left: 2px;
}
table {
  width: 100%;
  table-layout: fixed;
  border-collapse: separate;
  border-spacing: 0;
  background: #fff;
}
th,
td {
  height: 19px;
  padding: 0 3px;
  overflow: hidden;
  white-space: nowrap;
  text-align: left;
  vertical-align: top;
  font-weight: normal;
  line-height: 16px;
  border-right: 1px solid #b9c4d0;
  border-bottom: 1px solid #b9c4d0;
}
th {
  line-height: 18px;
  background: linear-gradient(#dfe3e7, #cdd3da);
}
td.num {
  text-align: right;
  padding-right: 10px;
}
.mark {
  background: linear-gradient(#dadee3, #c5ccd4);
  border-right: 2px solid #8d98a6;
  border-bottom-color: #8d98a6;
}
th.mark {
  padding: 1px 1px 0;
}
.fixed {
  background: #deebf5;
}
.current {
  background: #fcdb7e;
}
.w14 { width: 14px; }
.w22 { width: 22px; }
.w28 { width: 28px; }
.w35 { width: 35px; }
.w56 { width: 56px; }
.w70 { width: 70px; }
.w77 { width: 77px; }
.w84 { width: 84px; }
.w154 { width: 154px; }

.vscroll {
  width: 21px;
  padding: 19px 3px 0;
  display: flex;
  flex-direction: column;
  gap: 1px;
}
.hscroll {
  display: flex;
  gap: 1px;
  padding: 2px 24px 1px 85px;
}
.track {
  flex: 1;
  background: #fbfdfe;
}
.thumb {
  display: grid;
  place-items: center;
  border: 1px solid #8fa0b4;
  border-radius: 2px;
  background: linear-gradient(#eef4fa, #d3e1ee);
}
.hscroll .thumb {
  width: 54%;
  height: 16px;
  margin-left: 2px;
}
.vscroll .thumb {
  height: 69px;
  background: linear-gradient(90deg, #eef4fa, #d3e1ee);
}
i.dots {
  width: 8px;
  height: 8px;
  border: 0;
  background: radial-gradient(#8fa0b4 1px, transparent 1px) 0 0 / 3px 3px;
}
.vscroll button,
.hscroll button {
  width: 17px;
  height: 17px;
  background: #f3f7fc;
}
.vscroll button {
  width: 15px;
}

.item-line {
  align-items: center;
  height: 22px;
  margin-top: 22px;
}
.item-line label {
  width: 99px;
  height: 20px;
  padding: 2px 3px;
  border-bottom: 1px solid #c4c8ce;
}
.item-select {
  width: 286px;
}
.item-line .arrow {
  margin: 0 1px 0 22px;
}

/* tabs */
.tabstrip {
  display: flex;
  justify-content: space-between;
  height: 22px;
  margin-left: 21px;
  padding-top: 3px;
}
.tabs {
  display: flex;
  padding-left: 12px;
}
.tab {
  position: relative;
  height: 19px;
  margin-left: -6px;
  background: #7a9cc2;
  clip-path: polygon(0 100%, 18px 0, 100% 0, 100% 100%);
}
.tab::before {
  content: "";
  position: absolute;
  z-index: -1;
  inset: 1px 1px 0 1px;
  background: linear-gradient(#cfdfee, #b5cee6);
  clip-path: polygon(0 100%, 17px 0, 100% 0, 100% 100%);
}
.tab.active {
  z-index: 10;
  margin-left: -11px;
}
.tab.active::before {
  background: #8db1da;
}
/* each tab lies over the one to its right */
.t1 { width: 104px; z-index: 9; margin-left: 0; padding-left: 6px; }
.t2 { width: 126px; z-index: 8; }
.t3 { width: 85px; z-index: 7; }
.t4 { width: 147px; z-index: 6; }
.t5 { width: 134px; }
.t6 { width: 70px; z-index: 5; }
.t7 { width: 119px; z-index: 4; }
.t8 { width: 66px; z-index: 3; }
.t9 { width: 43px; z-index: 2; padding-left: 10px; }
.tab-nav {
  display: flex;
  gap: 3px;
  padding-right: 1px;
}
.tab-nav button {
  width: 16px;
  height: 16px;
  border: 1px solid #6f93bb;
  border-radius: 2px;
  background: #f2f7fc;
}
.tab-nav button.off {
  border-color: #a9c0da;
}
.off i {
  color: #8fb0d4;
}
.tab-nav svg {
  width: 12px;
  height: 12px;
}
.panel {
  flex: 1;
  margin-left: 21px;
  padding: 19px 6px 20px;
  background: #dfebf5;
  border: 1px solid #86a8cc;
  border-top: 2px solid #8db1da;
  border-bottom: 0;
  box-shadow: inset 0 1px #5f8ab8;
}

/* source of supply form */
.fields {
  display: grid;
  grid-template-columns: 280px 287px 1fr;
  grid-auto-rows: 22px;
}
.row {
  position: relative;
  display: flex;
  align-items: center;
}
.row label {
  width: 119px;
  height: 20px;
  flex: none;
  padding: 2px;
  border-bottom: 1px solid #b0b5ba;
}
.left { grid-column: 1; }
.middle { grid-column: 2; }
.right { grid-column: 3; }
.long { grid-column: 2 / 4; }
.middle label { width: 161px; }
.right label { width: 147px; }
.r1 { grid-row: 1; }
.r2 { grid-row: 2; }
.r3 { grid-row: 3; }
.r4 { grid-row: 4; }
.r5 { grid-row: 5; }
.r6 { grid-row: 6; }
.w26 { width: 26px; }
.w34 { width: 34px; }
.w258 { width: 258px; }
.next {
  margin-left: 1px;
}
.hint {
  margin-left: 4px;
  white-space: nowrap;
}
.off label {
  width: 139px;
  border: 0;
  padding-left: 1px;
  color: #8b9095;
}
.off input[type="checkbox"] {
  background: #e4edf5;
}
.focus {
  display: flex;
  position: relative;
}
.focus .field {
  background: #ffeb9c;
}
/* red corner marks round the active field */
.focus::before {
  content: "";
  position: absolute;
  inset: -2px;
  background:
    linear-gradient(red, red) 0 0 / 5px 1px,
    linear-gradient(red, red) 0 0 / 1px 5px,
    linear-gradient(red, red) 100% 0 / 5px 1px,
    linear-gradient(red, red) 100% 0 / 1px 5px,
    linear-gradient(red, red) 0 100% / 5px 1px,
    linear-gradient(red, red) 0 100% / 1px 5px,
    linear-gradient(red, red) 100% 100% / 5px 1px,
    linear-gradient(red, red) 100% 100% / 1px 5px;
  background-repeat: no-repeat;
}
.focus::after {
  content: "";
  position: absolute;
  left: 3px;
  top: 3px;
  width: 2px;
  height: 14px;
  background: #000050;
}
.match {
  width: 16px;
  height: 18px;
  background: #c3d5e8;
}
.match svg {
  width: 14px;
  height: 14px;
}
.marked::after {
  content: "";
  position: absolute;
  inset: -6px -26px -2px -5px;
  border: 5px solid #00a2ed;
}
.btn.assign {
  width: 202px;
  height: 22px;
  padding-left: 1px;
}
.assign span {
  flex: 1;
  text-align: center;
}
```
